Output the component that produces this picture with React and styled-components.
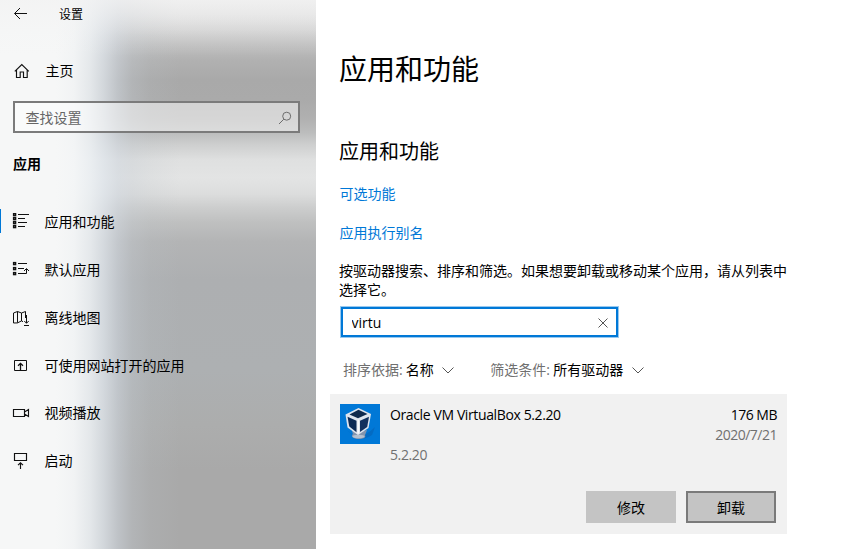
import React from "react";
import styled, { createGlobalStyle, css } from "styled-components";

const Global = createGlobalStyle`
  * { box-sizing: border-box; }
  body { margin: 0; background: #fff; overflow: hidden; }
  button, input { font: inherit; color: inherit; }
`;

const Window = styled.div`
  display: flex;
  width: 864px;
  height: 549px;
  overflow: hidden;
  background: #fff;
  color: #000;
  font: 14px/20px "Open Sans", "Noto Sans CJK SC", sans-serif;
`;

const Sidebar = styled.aside`
  display: flex;
  flex-direction: column;
  flex: 0 0 316px;
  background:
    linear-gradient(180deg, rgba(242, 242, 242, 0.7) 0, rgba(242, 242, 242, 0.4) 18px, rgba(242, 242, 242, 0.14) 36px, rgba(242, 242, 242, 0) 56px),
    linear-gradient(90deg, #f6f7f7 0, #f6f7f7 56px, rgba(244, 246, 247, 0.96) 74px, rgba(236, 240, 243, 0.88) 90px, rgba(224, 230, 236, 0.74) 104px, rgba(209, 216, 224, 0.54) 118px, rgba(198, 205, 212, 0.32) 132px, rgba(190, 198, 204, 0.14) 150px, rgba(190, 198, 204, 0) 180px),
    linear-gradient(180deg, #eaeaea 0, #dfdfdf 16px, #d0d0d0 31px, #bfbfbf 45px, #b1b1b1 60px, #a9a9a9 80px, #aaaaaa 100px, #b0b0b0 118px, #bcbdbd 133px, #cecfcf 145px, #dfe0e0 160px, #e3e4e4 178px, #dcdddd 194px, #cdcece 207px, #bfc0c0 222px, #b3b4b5 242px, #adafb1 280px, #adb0b2 370px, #acadad 425px, #a9a9a9 470px, #a9a9a9 549px);
`;

const TitleBar = styled.header`
  display: flex;
  align-items: center;
  height: 28px;
  padding-left: 13px;
  font-size: 12px;
  gap: 31px;
`;

const TitleText = styled.span`
  padding-top: 2px;
`;

const Icon = styled.svg`
  display: block;
  flex: none;
  width: ${(p) => p.$w || 16}px;
  height: ${(p) => p.$h || 16}px;
  fill: none;
  stroke: ${(p) => p.$color || "#111"};
  stroke-width: 1;
`;

const HomeLink = styled.a`
  display: flex;
  align-items: center;
  gap: 15.5px;
  height: 40px;
  margin-top: 23px;
  padding-left: 14px;
`;

const SettingsSearch = styled.div`
  display: flex;
  align-items: center;
  justify-content: space-between;
  width: 287px;
  height: 32px;
  margin: 10px 0 0 13px;
  padding: 1px 6px 0 10.5px;
  border: 2px solid #7b7b7b;
  background: rgba(255, 255, 255, 0.48);
  color: #666;
`;

const SectionName = styled.h3`
  margin: 21px 0 0 13px;
  font-size: 14px;
  line-height: 20px;
  font-weight: 700;
`;

const Nav = styled.nav`
  display: flex;
  flex-direction: column;
  margin-top: 24.4px;
`;

const NavItem = styled.a`
  display: flex;
  align-items: center;
  gap: 14.5px;
  height: 47.8px;
  padding-left: 12px;
  ${(p) =>
    p.$active &&
    css`
      background: linear-gradient(#0078d7, #0078d7) 0 11px / 1px 24px no-repeat;
    `}
`;

const Main = styled.main`
  flex: 1;
  padding: 49px 0 0 14px;
`;

const Title = styled.h1`
  margin: 0 0 0 9px;
  font-size: 28px;
  line-height: 40px;
  font-weight: 400;
`;

const Heading = styled.h2`
  margin: 48px 0 0 9px;
  font-size: 20px;
  line-height: 30px;
  font-weight: 400;
`;

const TextLink = styled.a`
  display: block;
  width: max-content;
  margin: ${(p) => p.$gap}px 0 0 9.5px;
  color: #0078d7;
`;

const Description = styled.p`
  width: 450px;
  margin: 18px 0 0 9px;
  line-height: 19px;
`;

const AppFilter = styled.div`
  display: flex;
  align-items: center;
  justify-content: space-between;
  width: 277px;
  height: 30px;
  margin: 8px 0 1px 10.5px;
  padding: 1px 7px 0 9px;
  border: 2px solid #0078d7;
  box-shadow: 0 0 0 1px rgba(0, 120, 215, 0.4);
`;

const FilterInput = styled.input`
  width: 200px;
  padding: 0;
  border: 0;
  outline: 0;
  background: transparent;
`;

const Options = styled.div`
  display: flex;
  gap: 35px;
  margin: 23px 0 0 13px;
`;

const Option = styled.div`
  display: flex;
  align-items: center;
  white-space: pre;
`;

const Muted = styled.span`
  color: #707070;
`;

const OptionLabel = styled(Muted)`
  margin-right: -0.5px;
`;

const Chevron = styled(Icon)`
  margin-left: 7.5px;
`;

const Card = styled.section`
  display: flex;
  flex-direction: column;
  justify-content: space-between;
  width: 457px;
  height: 140px;
  margin-top: 14px;
  padding: 10px 10px 11px;
  background: #f1f1f1;
`;

const AppInfo = styled.div`
  display: flex;
  gap: 10px;
`;

const Logo = styled.svg`
  display: block;
  flex: none;
  width: 40px;
  height: 40px;
`;

const Details = styled.div`
  display: flex;
  flex: 1;
  flex-direction: column;
  gap: 20px;
  margin-top: 1px;
  letter-spacing: -0.38px;
`;

const Meta = styled.div`
  display: flex;
  flex-direction: column;
  align-items: flex-end;
  margin-top: 1px;
  letter-spacing: -0.5px;
`;

const Actions = styled.div`
  display: flex;
  justify-content: flex-end;
  gap: 10px;
  margin-right: 1px;
`;

const ActionButton = styled.button`
  width: 90px;
  height: 32px;
  padding: 2px 0 0;
  border: 2px solid ${(p) => (p.$focused ? "#7a7a7a" : "#c4c4c4")};
  background: #c4c4c4;
  line-height: 20px;
`;

const bullets = (ys) =>
  ys.map((y) => <rect key={y} x="1.6" y={y + 0.1} width="2" height="2" strokeWidth="1.4" />);

const AppsIcon = () => (
  <Icon $w={18} $h={18} viewBox="0 0 18 18">
    {bullets([0.5, 4.5, 8.5, 12.5])}
    <path d="M6 1.5h11M6 5.5h7M6 9.5h9M6 13.5h7" />
  </Icon>
);
const DefaultsIcon = () => (
  <Icon $w={18} $h={18} viewBox="0 0 18 18">
    {bullets([1.5, 6.5, 11.5])}
    <path d="M6 2.5h9M6 7.5h6M6 12.5h8.5V8M12 10l2.5-2.5L17 10" />
  </Icon>
);
const MapIcon = () => (
  <Icon $w={18} $h={18} viewBox="0 0 18 18">
    <path d="M11 12.7l-1.5-.8-4 2-4 .1V4l4-1.5 4 1.5 4-1.5V9M5.5 2.5v11.2M9.5 4v8M14.5 6v8M12.3 12l2.2 2.3 2.2-2.3M12 16.5h5" />
  </Icon>
);
const WebsiteIcon = () => (
  <Icon $w={18} $h={18} viewBox="0 0 18 18">
    <path d="M2.5 3.5h12v10h-12z" />
    <path d="M8.5 13V7M6 8.7l2.5-2.4L11 8.7" strokeWidth="1.3" />
  </Icon>
);
const VideoIcon = () => (
  <Icon $w={18} $h={18} viewBox="0 0 18 18">
    <path d="M1.5 5.5h11v7h-11zM12.5 8l4-2.5v7l-4-2.5" strokeWidth="1.15" />
  </Icon>
);
const StartupIcon = () => (
  <Icon $w={18} $h={18} viewBox="0 0 18 18">
    <path d="M2.5 1.5h12v7h-12zM8.5 17v-6M6 13.2l2.5-2.4 2.5 2.4" strokeWidth="1.15" />
  </Icon>
);

const navItems = [
  { label: "应用和功能", Glyph: AppsIcon, active: true },
  { label: "默认应用", Glyph: DefaultsIcon },
  { label: "离线地图", Glyph: MapIcon },
  { label: "可使用网站打开的应用", Glyph: WebsiteIcon },
  { label: "视频播放", Glyph: VideoIcon },
  { label: "启动", Glyph: StartupIcon },
];

const ChevronDown = () => (
  <Chevron $w={14} $h={10} $color="#555" viewBox="0 0 14 10">
    <path d="M1.5 2.5L7 8l5.5-5.5" />
  </Chevron>
);

const VirtualBoxLogo = () => (
  <Logo viewBox="0 0 40 40">
    <rect width="40" height="40" fill="#0078d7" />
    <path d="M7 26q12 13 28-3l-3 8q-11 7-19 1z" fill="#0563b5" opacity=".6" />
    <path d="M12 27l6 1 9-2-2 5q2 4-7 4-7-1-6-4l1-1z" fill="#8294ad" />
    <ellipse cx="18.5" cy="32.5" rx="6" ry="1.8" fill="#b3c0d0" />
    <path d="M18.5 4L31 10l-2.5 14L18 31 7.5 23.5 5.5 10.5z" fill="#dfe5ee" />
    <path d="M18.5 5.7L27.5 10 18 14.3 9.5 10.5z" fill="#10294c" />
    <path d="M7.5 12.7l9 4v11.5L9.3 22.5z" fill="#0c2a55" />
    <path d="M20 16.7l9-4-1.8 10.2L20 28z" fill="#12305d" />
    <path d="M18.2 15.5v14" stroke="#fff" strokeWidth="1.2" />
  </Logo>
);

export default function App() {
  return (
    <>
      <Global />
      <Window>
        <Sidebar>
          <TitleBar>
            <Icon $w={15} viewBox="0 0 15 16">
              <path d="M14 7.5H1.8M7 2L1.5 7.5 7 13" />
            </Icon>
            <TitleText>设置</TitleText>
          </TitleBar>
          <HomeLink>
            <Icon viewBox="0 0 16 16">
              <path d="M.8 8.3L7.8 1.5l7 6.8M2.5 7v7.5h3.7V9h3.3v5.5h3.7V7" strokeWidth="1.15" />
            </Icon>
            <span>主页</span>
          </HomeLink>
          <SettingsSearch>
            <span>查找设置</span>
            <Icon $w={14} $h={14} $color="#6d6d6d" viewBox="0 0 14 14">
              <circle cx="8.7" cy="5.2" r="4" />
              <path d="M5.8 8.2L1 13" />
            </Icon>
          </SettingsSearch>
          <SectionName>应用</SectionName>
          <Nav>
            {navItems.map(({ label, Glyph, active }) => (
              <NavItem key={label} $active={active}>
                <Glyph />
                <span>{label}</span>
              </NavItem>
            ))}
          </Nav>
        </Sidebar>
        <Main>
          <Title>应用和功能</Title>
          <Heading>应用和功能</Heading>
          <TextLink $gap={17}>可选功能</TextLink>
          <TextLink $gap={19}>应用执行别名</TextLink>
          <Description>
            按驱动器搜索、排序和筛选。如果想要卸载或移动某个应用，请从列表中选择它。
          </Description>
          <AppFilter>
            <FilterInput defaultValue="virtu" />
            <Icon $w={12} $h={12} $color="#555" viewBox="0 0 12 12">
              <path d="M1.5 1.5l9 9M10.5 1.5l-9 9" />
            </Icon>
          </AppFilter>
          <Options>
            <Option>
              <OptionLabel>排序依据: </OptionLabel>
              <span>名称</span>
              <ChevronDown />
            </Option>
            <Option>
              <OptionLabel>筛选条件: </OptionLabel>
              <span>所有驱动器</span>
              <ChevronDown />
            </Option>
          </Options>
          <Card>
            <AppInfo>
              <VirtualBoxLogo />
              <Details>
                <span>Oracle VM VirtualBox 5.2.20</span>
                <Muted>5.2.20</Muted>
              </Details>
              <Meta>
                <span>176 MB</span>
                <Muted>2020/7/21</Muted>
              </Meta>
            </AppInfo>
            <Actions>
              <ActionButton>修改</ActionButton>
              <ActionButton $focused>卸载</ActionButton>
            </Actions>
          </Card>
        </Main>
      </Window>
    </>
  );
}
